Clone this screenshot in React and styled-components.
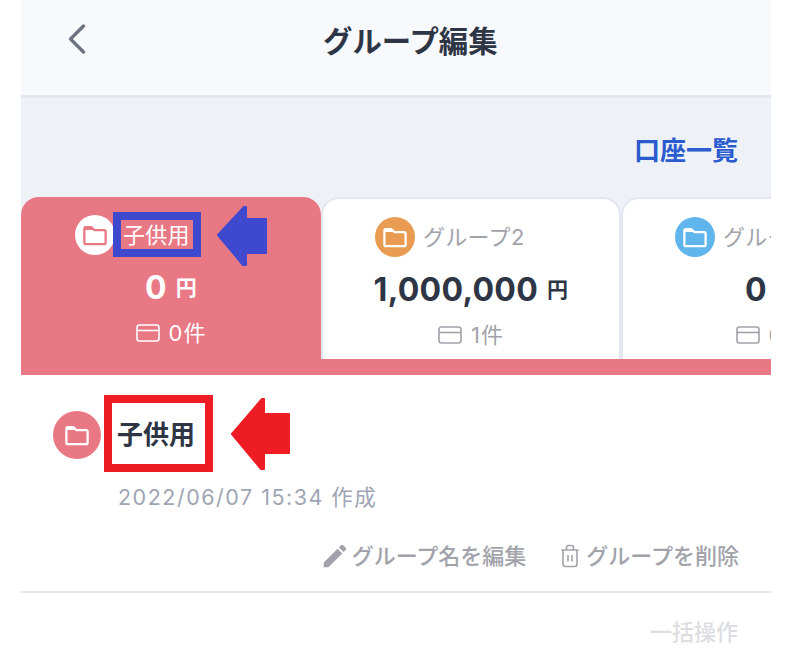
import React from "react";
import styled, { createGlobalStyle } from "styled-components";
import { MdEdit } from "react-icons/md";

const GlobalStyle = createGlobalStyle`
  html, body {
    margin: 0;
    background: #fff;
    font-family: Inter, "Noto Sans CJK JP", sans-serif;
  }
`;

const groups = [
  { name: "子供用", amount: "0", count: 0, color: "#e97885", active: true },
  { name: "グループ2", amount: "1,000,000", count: 1, color: "#ea9b52" },
  { name: "グループ3", amount: "0", count: 0, color: "#5fb5ec" },
];

const FolderIcon = ({ size, color }) => (
  <svg width={size} height={size} viewBox="0 0 24 24" fill="none">
    <path
      d="M4.5 7.5a1 1 0 0 1 1-1h4l2 2h7a1 1 0 0 1 1 1v8a1 1 0 0 1-1 1h-13a1 1 0 0 1-1-1z"
      stroke={color}
      strokeWidth="1.6"
      strokeLinejoin="round"
    />
    <path d="M4.5 7.5a1 1 0 0 1 1-1h4l2 2h-7z" fill={color} />
  </svg>
);

const CardIcon = ({ color }) => (
  <svg width="24" height="18" viewBox="0 0 24 18" fill="none">
    <rect x="1" y="1" width="22" height="16" rx="2.5" stroke={color} strokeWidth="1.6" />
    <path d="M1 6.5h22" stroke={color} strokeWidth="1.6" />
  </svg>
);

const TrashIcon = () => (
  <svg width="20" height="24" viewBox="0 0 20 24" fill="none" stroke="#a2a3aa" strokeWidth="1.6">
    <path d="M2 6h16" strokeLinecap="round" />
    <path d="M6.5 6V3.5a2 2 0 0 1 2-2h3a2 2 0 0 1 2 2V6" />
    <path d="M3 6v14a2.5 2.5 0 0 0 2.5 2.5h9A2.5 2.5 0 0 0 17 20V6" />
    <path d="M8 11v6.5M12 11v6.5" />
  </svg>
);

const ArrowIcon = ({ width, height, color, d }) => (
  <svg width={width} height={height} viewBox={`0 0 ${width} ${height}`}>
    <path d={d} fill={color} stroke={color} strokeWidth="2" strokeLinejoin="round" />
  </svg>
);

const Page = styled.div`
  position: relative;
  width: 800px;
  height: 664px;
  overflow: hidden;
`;

const Screen = styled.div`
  width: 750px;
  height: 664px;
  margin-left: 21px;
  overflow: hidden;
  background: #fff;
`;

const Header = styled.header`
  display: flex;
  align-items: center;
  gap: 236px;
  box-sizing: border-box;
  height: 98px;
  padding: 0 0 18px 46px;
  background: #f8f9fd;
  border-bottom: 3px solid #e4e7f0;
`;

const BackIcon = styled.svg`
  width: 20px;
  height: 32px;
`;

const Title = styled.h1`
  margin: 0;
  font-size: 29.4px;
  font-weight: 700;
  color: #2e3646;
`;

const Toolbar = styled.div`
  display: flex;
  align-items: flex-start;
  justify-content: flex-end;
  box-sizing: border-box;
  height: 99px;
  padding: 35px 33px 0 0;
  background: #eef1f6;
`;

const ListLink = styled.a`
  font-size: 26px;
  line-height: 36px;
  font-weight: 700;
  color: #2a5bcf;
`;

const Tabs = styled.div`
  display: flex;
  height: 178px;
  background: linear-gradient(#eef1f6 162px, #e97885 162px);
`;

const Tab = styled.div`
  flex: 0 0 300px;
  box-sizing: border-box;
  height: ${(p) => (p.$active ? "178px" : "162px")};
  padding: 16px 0 0 ${(p) => (p.$active ? "54px" : "52px")};
  border: ${(p) => (p.$active ? "0" : "2px solid #e4e7f0")};
  border-bottom: 0;
  border-radius: 18px 18px 0 0;
  background: ${(p) => (p.$active ? "#e97885" : "#fff")};
  color: ${(p) => (p.$active ? "#fff" : "#a2a3aa")};
  white-space: nowrap;
`;

const TabLabel = styled.div`
  display: flex;
  align-items: center;
  gap: 8px;
  height: 44px;
  font-size: 22px;
  letter-spacing: 0.3px;
`;

const LabelText = styled.span`
  position: relative;
  top: -2px;
`;

const Badge = styled.span`
  display: flex;
  flex: none;
  align-items: center;
  justify-content: center;
  width: ${(p) => p.$size}px;
  height: ${(p) => p.$size}px;
  border-radius: 50%;
  background: ${(p) => p.$bg};
`;

const Amount = styled.div`
  display: flex;
  align-items: center;
  justify-content: center;
  gap: 9px;
  margin: 8px 0 0 ${(p) => (p.$active ? "-54px" : "-52px")};
  height: 46px;
  font-size: 32px;
  line-height: 46px;
  font-weight: 700;
  letter-spacing: 0.3px;
  color: ${(p) => (p.$active ? "#fff" : "#2e3646")};
`;

const Yen = styled.span`
  font-size: 21px;
  font-weight: 700;
  line-height: 30px;
`;

const Count = styled.div`
  display: flex;
  align-items: center;
  justify-content: center;
  gap: 9px;
  margin: 2px 0 0 ${(p) => (p.$active ? "-54px" : "-52px")};
  height: 40px;
  font-size: 22px;
  line-height: 38px;
  letter-spacing: 1px;
`;

const Detail = styled.section`
  padding: 36px 32px 0;
`;

const NameRow = styled.div`
  display: flex;
  align-items: center;
  gap: 16px;
`;

const GroupName = styled.h2`
  margin: 0;
  font-size: 26px;
  line-height: 48px;
  font-weight: 700;
  color: #2e3646;
`;

const CreatedAt = styled.div`
  margin: 22px 0 0 65px;
  font-size: 21.5px;
  line-height: 32px;
  letter-spacing: 1.5px;
  color: #9ea5b4;
`;

const Actions = styled.div`
  display: flex;
  justify-content: flex-end;
  gap: 34px;
  margin: 27px 0 0;
  height: 32px;
`;

const Action = styled.button`
  display: flex;
  align-items: center;
  gap: ${(p) => p.$gap}px;
  padding: 0;
  border: 0;
  background: none;
  font: inherit;
  font-size: 22px;
  line-height: 32px;
  font-weight: 500;
  color: #a2a3aa;
`;

const Divider = styled.hr`
  height: 2px;
  margin: 19px 0 0;
  border: 0;
  background: #e4e4ec;
`;

const BulkAction = styled.div`
  padding: 23px 33px 0 0;
  text-align: right;
  font-size: 22px;
  line-height: 32px;
  font-weight: 500;
  color: #dcdde2;
`;

const Highlight = styled.div`
  position: absolute;
  left: ${(p) => p.$left}px;
  top: ${(p) => p.$top}px;
  width: ${(p) => p.$width}px;
  height: ${(p) => p.$height}px;
  box-sizing: border-box;
  border: 8px solid ${(p) => p.$color};
`;

const Pointer = styled.div`
  position: absolute;
  left: ${(p) => p.$left}px;
  top: ${(p) => p.$top}px;
  line-height: 0;
`;

const GroupTab = ({ name, amount, count, color, active }) => (
  <Tab $active={active}>
    <TabLabel>
      <Badge $size={40} $bg={active ? "#fff" : color}>
        <FolderIcon size={34} color={active ? color : "#fff"} />
      </Badge>
      <LabelText>{name}</LabelText>
    </TabLabel>
    <Amount $active={active}>
      {amount}
      <Yen>円</Yen>
    </Amount>
    <Count $active={active}>
      <CardIcon color={active ? "#fff" : "#a2a3aa"} />
      {count}件
    </Count>
  </Tab>
);

export default function App() {
  return (
    <Page>
      <GlobalStyle />
      <Screen>
        <Header>
          <BackIcon viewBox="0 0 20 32" fill="none">
            <path
              d="M16.5 3 3.5 16l13 13"
              stroke="#6b7280"
              strokeWidth="3.4"
              strokeLinecap="round"
              strokeLinejoin="round"
            />
          </BackIcon>
          <Title>グループ編集</Title>
        </Header>
        <Toolbar>
          <ListLink>口座一覧</ListLink>
        </Toolbar>
        <Tabs>
          {groups.map((g) => (
            <GroupTab key={g.name} {...g} />
          ))}
        </Tabs>
        <Detail>
          <NameRow>
            <Badge $size={48} $bg="#e97885">
              <FolderIcon size={34} color="#fff" />
            </Badge>
            <GroupName>子供用</GroupName>
          </NameRow>
          <CreatedAt>2022/06/07 15:34 作成</CreatedAt>
          <Actions>
            <Action $gap={2}>
              <MdEdit size={30} color="#a2a3aa" />
              グループ名を編集
            </Action>
            <Action $gap={6}>
              <TrashIcon />
              グループを削除
            </Action>
          </Actions>
        </Detail>
        <Divider />
        <BulkAction>一括操作</BulkAction>
      </Screen>
      <Highlight $left={113} $top={212} $width={88} $height={45} $color="#3f49cf" />
      <Pointer $left={216} $top={205}>
        <ArrowIcon
          width={52}
          height={62}
          color="#3f49cf"
          d="M2 30 28 2h2v12h20v34H30v12h-3z"
        />
      </Pointer>
      <Highlight $left={104} $top={395} $width={109} $height={77} $color="#ee1c25" />
      <Pointer $left={230} $top={397}>
        <ArrowIcon
          width={60}
          height={74}
          color="#ee1c25"
          d="M2 37 32 2h2v15h25v39H34v16h-3z"
        />
      </Pointer>
    </Page>
  );
}
